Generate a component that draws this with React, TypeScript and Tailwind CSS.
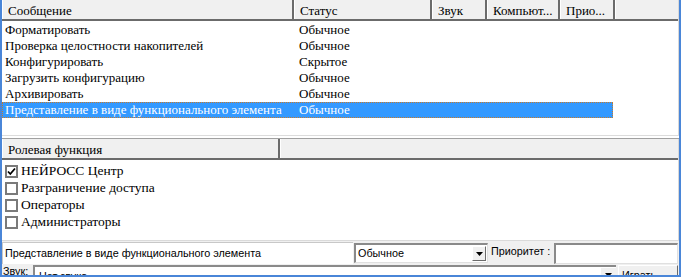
import React from 'react';

const rows: [string, string][] = [
  ['Форматировать', 'Обычное'],
  ['Проверка целостности накопителей', 'Обычное'],
  ['Конфигурировать', 'Скрытое'],
  ['Загрузить конфигурацию', 'Обычное'],
  ['Архивировать', 'Обычное'],
  ['Представление в виде функционального элемента', 'Обычное'],
];

const roles: [string, boolean][] = [
  ['НЕЙРОСС Центр', true],
  ['Разграничение доступа', false],
  ['Операторы', false],
  ['Администраторы', false],
];

function HCell({ w, children, grow }: { w?: string; children?: React.ReactNode; grow?: boolean }) {
  return (
    <div
      className={`h-full flex items-center pl-[5px] pt-[3px] border-l border-l-white overflow-hidden whitespace-nowrap ${grow ? 'flex-1' : 'border-r-2 border-r-[#6b6b6b]'} ${w ?? ''}`}
    >
      {children}
    </div>
  );
}

function Check({ on }: { on: boolean }) {
  return (
    <div className="w-[13px] h-[13px] border-2 border-[#7a7a7a] bg-white flex items-center justify-center shrink-0">
      {on && (
        <svg width="9" height="9" viewBox="0 0 9 9">
          <path d="M1 4.5 L3.3 7 L8 1.5" stroke="#000" strokeWidth="1.8" fill="none" />
        </svg>
      )}
    </div>
  );
}

function Arrow() {
  return (
    <svg width="7" height="4" viewBox="0 0 7 4">
      <path d="M0 0 H7 L3.5 4 Z" fill="#000" />
    </svg>
  );
}

export default function App() {
  return (
    <div className="w-[681px] h-[277px] overflow-hidden bg-[#f0f0f0] border-l-2 border-r-2 border-b-2 border-[#4a86d8] flex flex-col font-['Liberation_Serif','Times_New_Roman',serif]">
      {/* List 1 */}
      <div className="h-[135px] bg-white border-r border-[#d8d8d8] flex flex-col shrink-0">
        <div className="h-[21px] flex bg-[#f0f0f0] border-b-2 border-[#6b6b6b] text-[13px] text-black shrink-0">
          <HCell w="w-[292px]">Сообщение</HCell>
          <HCell w="w-[138px]">Статус</HCell>
          <HCell w="w-[55px]">Звук</HCell>
          <HCell w="w-[73px]">Компьют...</HCell>
          <HCell w="w-[55px]">Прио...</HCell>
          <HCell grow />
        </div>
        <div className="pt-[1px] flex flex-col text-[13px]">
          {rows.map(([a, b], i) => {
            const sel = i === rows.length - 1;
            return (
              <div
                key={i}
                className={`h-[16px] w-[611px] flex items-center whitespace-nowrap ${sel ? 'bg-[#3399ff] text-white outline-1 outline-dotted outline-[#c87a2a] -outline-offset-1' : 'text-black'}`}
              >
                <div className="w-[294px] pl-[3px] shrink-0">{a}</div>
                <div className="pl-[3px]">{b}</div>
              </div>
            );
          })}
        </div>
      </div>

      {/* splitter */}
      <div className="h-[4px] shrink-0 border-t border-[#dcdcdc] bg-white border-b border-b-[#a0a0a0]" />

      {/* List 2 */}
      <div className="h-[101px] bg-white border-r border-[#d8d8d8] flex flex-col shrink-0">
        <div className="h-[21px] flex bg-[#f0f0f0] border-b-2 border-[#6b6b6b] text-[13px] text-black shrink-0">
          <HCell w="w-[278px]">Ролевая функция</HCell>
          <HCell grow />
        </div>
        <div className="pt-[3px] flex flex-col text-[13.5px] text-black">
          {roles.map(([t, on]) => (
            <div key={t} className="h-[17px] flex items-center pl-[3px] gap-[3px] whitespace-nowrap">
              <Check on={on} />
              <span>{t}</span>
            </div>
          ))}
        </div>
      </div>

      {/* Bottom panel */}
      <div className="flex-1 border-t border-[#dadada] flex flex-col text-[10.8px] text-black font-['Liberation_Sans',Arial,sans-serif]">
        <div className="h-[22px] mt-[1px] flex items-stretch shrink-0">
          <div className="w-[351px] bg-white border-t border-l border-[#c8c8c8] flex items-center pl-[2px] whitespace-nowrap">
            Представление в виде функционального элемента
          </div>
          <div className="w-[134px] ml-[1px] my-[1px] bg-white border-t-2 border-l-2 border-t-[#8a8a8a] border-l-[#8a8a8a] border-r border-b border-r-[#e0e0e0] border-b-[#e0e0e0] flex items-center">
            <span className="flex-1 pl-[2px]">Обычное</span>
            <div className="w-[14px] h-[15px] mr-[1px] bg-[#f0f0f0] border border-[#6b6b6b] border-t-white border-l-white flex items-center justify-center">
              <Arrow />
            </div>
          </div>
          <div className="pl-[3px] pr-[4px] pt-[1px] whitespace-nowrap">Приоритет :</div>
          <div className="flex-1 mt-[1px] bg-white border-t-2 border-l-2 border-t-[#8a8a8a] border-l-[#8a8a8a] border-r border-b border-r-[#e0e0e0] border-b-[#e0e0e0] mr-[1px]" />
        </div>
        <div className="flex-1 flex items-stretch pt-[1px] min-h-0">
          <div className="w-[31px] pl-[1px] leading-[12px] whitespace-nowrap">Звук:</div>
          <div className="w-[583px] bg-white border-t-2 border-l-2 border-t-[#8a8a8a] border-l-[#8a8a8a] flex items-start">
            <span className="flex-1 pl-[4px] pt-[3px] leading-[12px]">Нет звука</span>
            <div className="w-[16px] h-full bg-[#f0f0f0] border-t border-l border-white flex items-center justify-center">
              <Arrow />
            </div>
          </div>
          <div className="flex-1 ml-[2px] mr-[1px] border-t border-l border-white border-r border-r-[#6b6b6b] bg-[#f0f0f0] pl-[3px] pt-[3px] leading-[12px] whitespace-nowrap overflow-hidden">
            Играть
          </div>
        </div>
      </div>
    </div>
  );
}
